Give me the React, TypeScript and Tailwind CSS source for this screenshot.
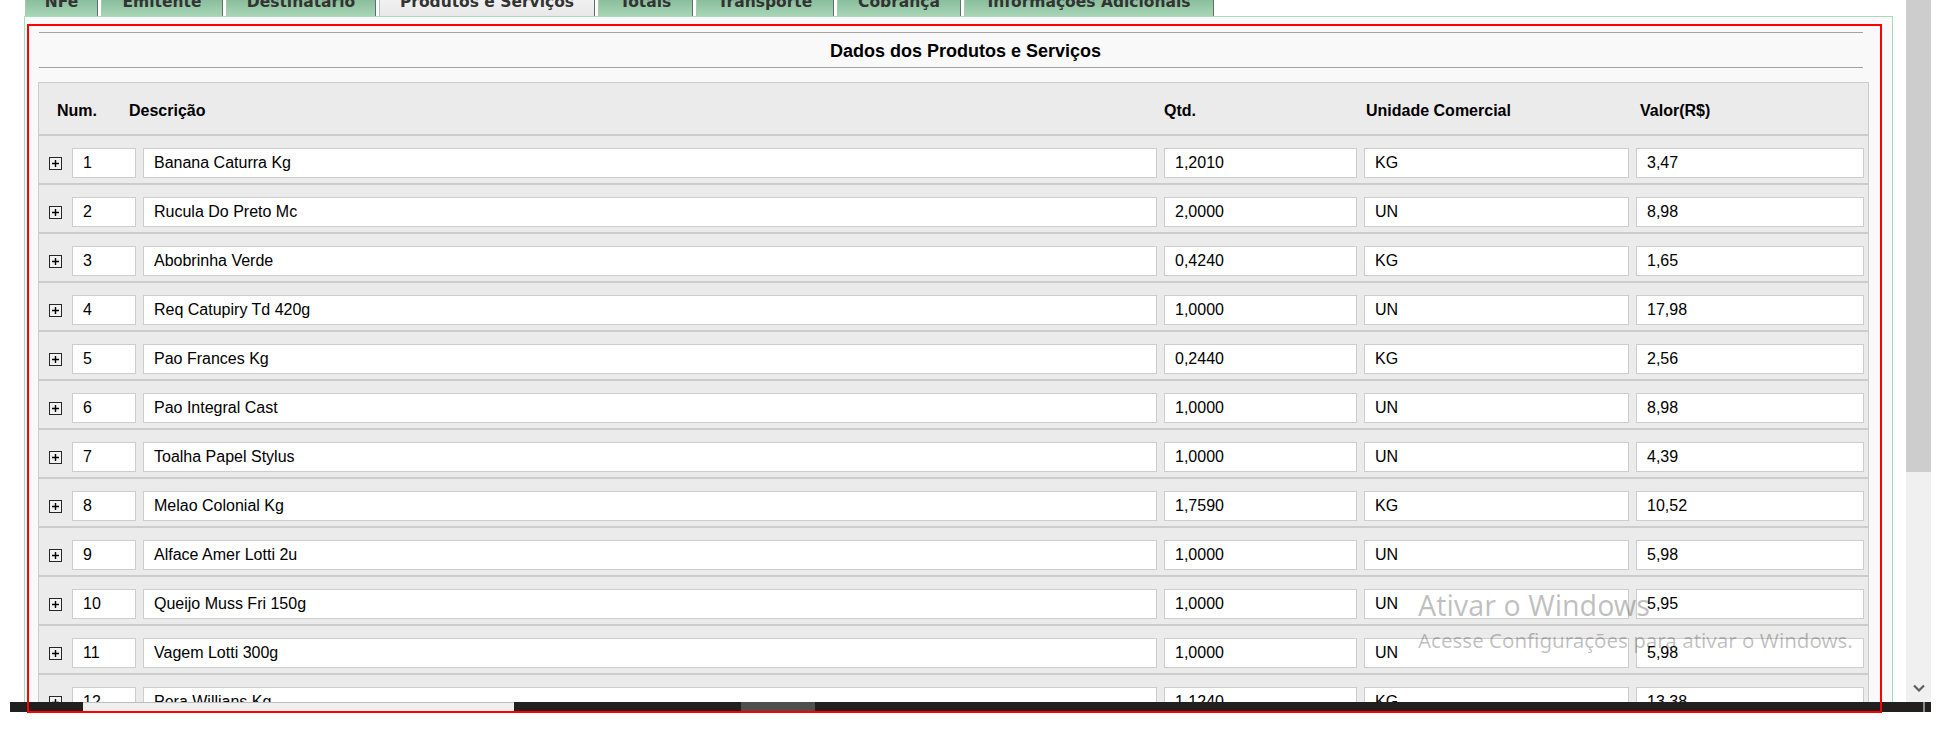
import React from 'react';

interface Item {
  num: number;
  desc: string;
  qtd: string;
  un: string;
  valor: string;
}

const items: Item[] = [
  { num: 1, desc: 'Banana Caturra Kg', qtd: '1,2010', un: 'KG', valor: '3,47' },
  { num: 2, desc: 'Rucula Do Preto Mc', qtd: '2,0000', un: 'UN', valor: '8,98' },
  { num: 3, desc: 'Abobrinha Verde', qtd: '0,4240', un: 'KG', valor: '1,65' },
  { num: 4, desc: 'Req Catupiry Td 420g', qtd: '1,0000', un: 'UN', valor: '17,98' },
  { num: 5, desc: 'Pao Frances Kg', qtd: '0,2440', un: 'KG', valor: '2,56' },
  { num: 6, desc: 'Pao Integral Cast', qtd: '1,0000', un: 'UN', valor: '8,98' },
  { num: 7, desc: 'Toalha Papel Stylus', qtd: '1,0000', un: 'UN', valor: '4,39' },
  { num: 8, desc: 'Melao Colonial Kg', qtd: '1,7590', un: 'KG', valor: '10,52' },
  { num: 9, desc: 'Alface Amer Lotti 2u', qtd: '1,0000', un: 'UN', valor: '5,98' },
  { num: 10, desc: 'Queijo Muss Fri 150g', qtd: '1,0000', un: 'UN', valor: '5,95' },
  { num: 11, desc: 'Vagem Lotti 300g', qtd: '1,0000', un: 'UN', valor: '5,98' },
  { num: 12, desc: 'Pera Willians Kg', qtd: '1,1240', un: 'KG', valor: '13,38' },
];

const tabs = [
  { label: 'NFe', w: 'w-[73px]' },
  { label: 'Emitente', w: 'w-[122px]' },
  { label: 'Destinatário', w: 'w-[150px]' },
  { label: 'Produtos e Serviços', w: 'w-[216px]', active: true },
  { label: 'Totais', w: 'w-[95px]' },
  { label: 'Transporte', w: 'w-[138px]' },
  { label: 'Cobrança', w: 'w-[124px]' },
  { label: 'Informações Adicionais', w: 'w-[250px]' },
];

const PlusBox = () => (
  <svg width="13" height="13" viewBox="0 0 13 13">
    <rect x="0.5" y="0.5" width="12" height="12" fill="#f2f2f2" stroke="#262626" />
    <path d="M6.5 3v7M3 6.5h7" stroke="#000" strokeWidth="1.4" />
  </svg>
);

const Field = ({ value }: { value: string | number }) => (
  <div className="h-[30px] border border-[#cdcdcd] bg-white pl-[10px] flex items-center text-[16px] whitespace-nowrap overflow-hidden">
    {value}
  </div>
);

const App: React.FC = () => {
  return (
    <div className="relative w-[1942px] h-[738px] overflow-hidden bg-white text-black font-['Liberation_Sans',Arial,sans-serif]">
      <div className="flex h-[702px]">
        {/* Page */}
        <div className="w-[1906px] h-full overflow-hidden pl-[24px]">
          {/* Tabs */}
          <div className="-mt-[24px] flex h-[40px] gap-[3px] pl-px">
            {tabs.map((t) => (
              <div
                key={t.label}
                className={`${t.w} h-full flex items-end justify-center pb-[6px] border-l border-r border-l-[#a9c7b2] border-r-[#5f6f64] font-['DejaVu_Sans',Verdana,sans-serif] font-bold text-[15.5px] leading-[16px] text-[#333] whitespace-nowrap ${
                  t.active
                    ? 'bg-gradient-to-b from-[#ffffff] to-[#e8e8e8]'
                    : 'bg-gradient-to-b from-[#5e9a74] to-[#a7d6b6]'
                }`}
              >
                {t.label}
              </div>
            ))}
          </div>

          {/* Panel */}
          <div className="w-[1869px] h-[700px] border border-[#a8d9ba] bg-[#f9f9f9] pl-[13px] pr-[23px] pt-[15px]">
            <div className="ml-px mr-[6px] h-[36px] border-t border-b border-[#a3a3a3] flex items-center justify-center pl-[29px] pt-[2px] text-[18px] font-bold">
              Dados dos Produtos e Serviços
            </div>

            <div className="mt-[14px]">
              {/* Header */}
              <div className="h-[54px] border border-[#cccccc] border-b-2 bg-[#ebebeb] flex items-center pl-[18px] pt-[4px] text-[16px] font-bold">
                <div className="w-[72px]">Num.</div>
                <div className="w-[1035px]">Descrição</div>
                <div className="w-[202px]">Qtd.</div>
                <div className="w-[274px]">Unidade Comercial</div>
                <div>Valor(R$)</div>
              </div>

              {/* Rows */}
              {items.map((it) => (
                <div
                  key={it.num}
                  className="border-l border-r border-b-2 border-[#cccccc] bg-[#ebebeb] pt-[12px] pb-[5px] pl-[10px] grid grid-cols-[16px_64px_1014px_193px_265px_228px] gap-x-[7px] items-center"
                >
                  <PlusBox />
                  <Field value={it.num} />
                  <Field value={it.desc} />
                  <Field value={it.qtd} />
                  <Field value={it.un} />
                  <Field value={it.valor} />
                </div>
              ))}
            </div>
          </div>
        </div>

        {/* Vertical scrollbar */}
        <div className="w-[25px] h-full flex flex-col">
          <div className="h-[472px] bg-[#cdcdcd]" />
          <div className="flex-1 bg-[#f0f0f0] flex items-end justify-center pb-[10px]">
            <svg width="12" height="8" viewBox="0 0 12 8">
              <path d="M1 1.5l5 5 5-5" fill="none" stroke="#5f5f5f" strokeWidth="2.2" />
            </svg>
          </div>
        </div>
      </div>

      {/* Horizontal bar */}
      <div className="ml-[10px] w-[1921px] h-[10px] flex bg-[#22201e]">
        <div className="w-[73px]" />
        <div className="w-[431px] bg-[#efefef] border-t border-[#bdbdbd]" />
        <div className="w-[227px]" />
        <div className="w-[74px] bg-[#4f4f4f]" />
        <div className="flex-1" />
        <div className="w-[2px] bg-[#8a8a8a] mr-[6px]" />
      </div>

      {/* Windows watermark */}
      <div className="absolute left-[1418px] top-[587px] pointer-events-none font-['Noto_Sans','Open_Sans',sans-serif] text-black/25">
        <div className="text-[28.5px] leading-[36px]">Ativar o Windows</div>
        <div className="text-[20.5px] leading-[28px] mt-[3px]">Acesse Configurações para ativar o Windows.</div>
      </div>

      {/* Red annotation rectangle */}
      <div className="absolute left-[27px] top-[24px] w-[1855px] h-[689px] border-2 border-[#ff0000] pointer-events-none" />
    </div>
  );
};

export default App;
